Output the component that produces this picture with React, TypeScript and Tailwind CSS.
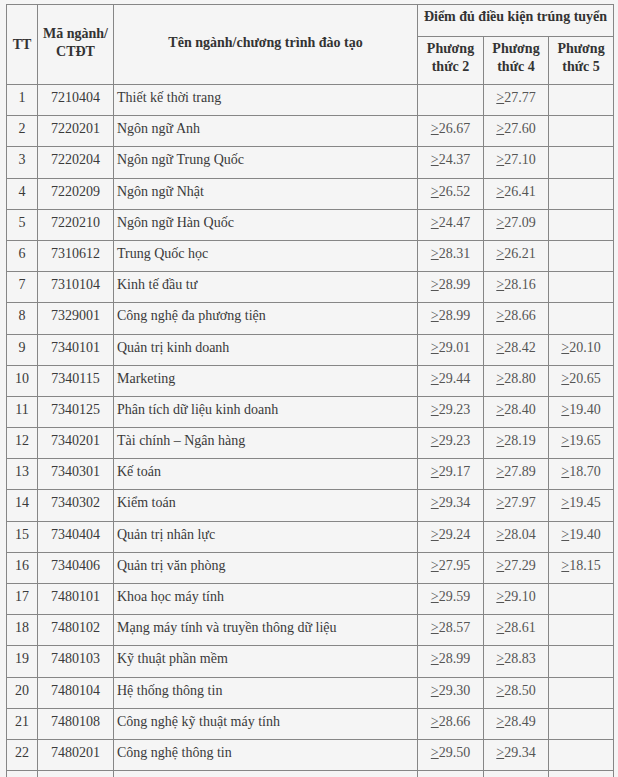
import React from "react";

const rows: [string, string, string, string, string, string][] = [
  ["1", "7210404", "Thiết kế thời trang", "", "27.77", ""],
  ["2", "7220201", "Ngôn ngữ Anh", "26.67", "27.60", ""],
  ["3", "7220204", "Ngôn ngữ Trung Quốc", "24.37", "27.10", ""],
  ["4", "7220209", "Ngôn ngữ Nhật", "26.52", "26.41", ""],
  ["5", "7220210", "Ngôn ngữ Hàn Quốc", "24.47", "27.09", ""],
  ["6", "7310612", "Trung Quốc học", "28.31", "26.21", ""],
  ["7", "7310104", "Kinh tế đầu tư", "28.99", "28.16", ""],
  ["8", "7329001", "Công nghệ đa phương tiện", "28.99", "28.66", ""],
  ["9", "7340101", "Quản trị kinh doanh", "29.01", "28.42", "20.10"],
  ["10", "7340115", "Marketing", "29.44", "28.80", "20.65"],
  ["11", "7340125", "Phân tích dữ liệu kinh doanh", "29.23", "28.40", "19.40"],
  ["12", "7340201", "Tài chính – Ngân hàng", "29.23", "28.19", "19.65"],
  ["13", "7340301", "Kế toán", "29.17", "27.89", "18.70"],
  ["14", "7340302", "Kiểm toán", "29.34", "27.97", "19.45"],
  ["15", "7340404", "Quản trị nhân lực", "29.24", "28.04", "19.40"],
  ["16", "7340406", "Quản trị văn phòng", "27.95", "27.29", "18.15"],
  ["17", "7480101", "Khoa học máy tính", "29.59", "29.10", ""],
  ["18", "7480102", "Mạng máy tính và truyền thông dữ liệu", "28.57", "28.61", ""],
  ["19", "7480103", "Kỹ thuật phần mềm", "28.99", "28.83", ""],
  ["20", "7480104", "Hệ thống thông tin", "29.30", "28.50", ""],
  ["21", "7480108", "Công nghệ kỹ thuật máy tính", "28.66", "28.49", ""],
  ["22", "7480201", "Công nghệ thông tin", "29.50", "29.34", ""],
  ["", "", "", "", "", ""],
];

const td = "border border-[#868686] align-top pt-[3px] leading-[20px]";
const th = "border border-[#868686] font-bold text-[#333] leading-[18px]";

function Score({ v }: { v: string }) {
  if (!v) return null;
  return (
    <span>
      <span className="underline underline-offset-[1px]">&gt;</span>
      {v}
    </span>
  );
}

export default function App() {
  return (
    <div
      className="min-h-[777px] bg-[#f5f5f5] pt-[4px] pl-[6px] text-[14px] text-[#3a3a3a]"
      style={{ fontFamily: '"Liberation Serif", "Times New Roman", serif' }}
    >
      <table className="table-fixed border-collapse w-[608px]">
        <colgroup>
          <col className="w-[31px]" />
          <col className="w-[76px]" />
          <col className="w-[304px]" />
          <col className="w-[66px]" />
          <col className="w-[65px]" />
          <col className="w-[65px]" />
        </colgroup>
        <thead>
          <tr className="h-[32px]">
            <th rowSpan={2} className={`${th} align-middle text-center`}>TT</th>
            <th rowSpan={2} className={`${th} align-middle text-center pb-[4px]`}>
              Mã ngành/
              <br />
              CTĐT
            </th>
            <th rowSpan={2} className={`${th} align-middle text-center pb-[4px]`}>
              Tên ngành/chương trình đào tạo
            </th>
            <th colSpan={3} className={`${th} align-top text-center pt-[3px]`}>
              Điểm đủ điều kiện trúng tuyển
            </th>
          </tr>
          <tr className="h-[48px]">
            <th className={`${th} align-top text-center pt-[3px]`}>
              Phương
              <br />
              thức 2
            </th>
            <th className={`${th} align-top text-center pt-[3px]`}>
              Phương
              <br />
              thức 4
            </th>
            <th className={`${th} align-top text-center pt-[3px]`}>
              Phương
              <br />
              thức 5
            </th>
          </tr>
        </thead>
        <tbody>
          {rows.map((r, i) => (
            <tr key={i} className="h-[31.2px]">
              <td className={`${td} text-center`}>{r[0]}</td>
              <td className={`${td} text-center`}>{r[1]}</td>
              <td className={`${td} text-left pl-[3px]`}>{r[2]}</td>
              <td className={`${td} text-center text-[#555]`}><Score v={r[3]} /></td>
              <td className={`${td} text-center text-[#555]`}><Score v={r[4]} /></td>
              <td className={`${td} text-center text-[#555]`}><Score v={r[5]} /></td>
            </tr>
          ))}
        </tbody>
      </table>
    </div>
  );
}
